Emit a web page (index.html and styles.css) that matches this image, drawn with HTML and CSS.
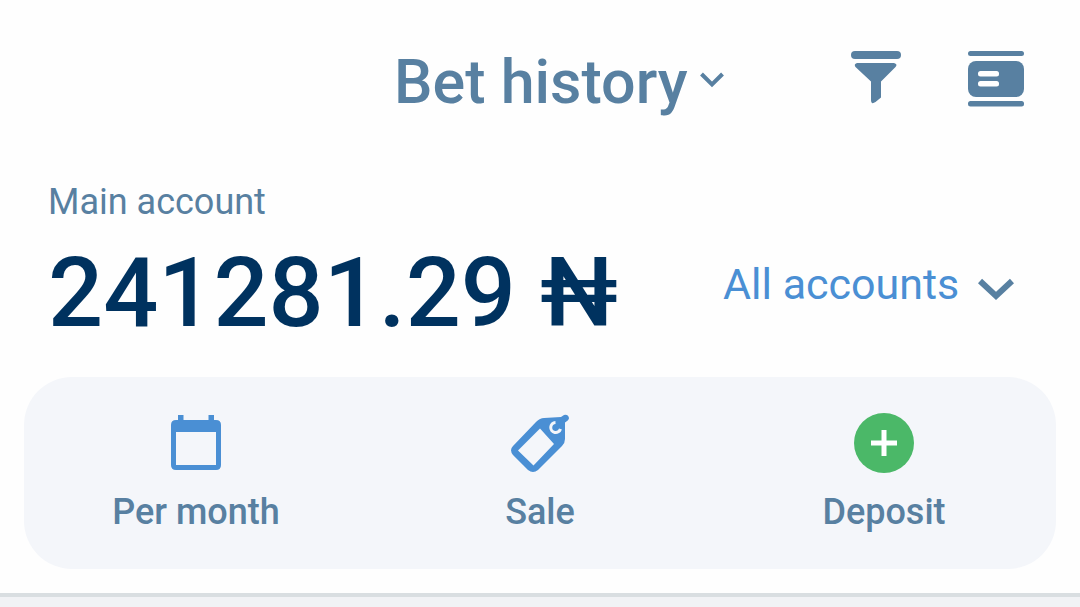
FILE: index.html
```
<!DOCTYPE html>
<html lang="en">
<head>
    <meta charset="UTF-8">
    <meta name="viewport" content="width=device-width, initial-scale=1.0">
    <title>Bet history</title>
    <link rel="stylesheet" href="styles.css">
</head>
<body>

    <main class="account">

        <header class="top_bar">
            <h1 class="page_pick">
                <select class="page_select" aria-label="Page">
                    <option>Bet history</option>
                </select>
                <svg class="page_arrow" viewBox="0 0 24 20" aria-hidden="true">
                    <path d="M1.5 2 L12 12.5 L22.5 2" />
                </svg>
            </h1>
            <div class="tools">
                <button type="button" class="tool" aria-label="Filter">
                    <svg viewBox="0 0 56 64">
                        <rect x="3" y="1" width="50" height="8" rx="4" />
                        <path d="M9 13 H46 Q50 14 47.5 17 L33 31.500 V47.500 L27.500 52 Q23 55 23 50 V31.500 L7.500 17 Q5.500 14 9 13 Z" />
                    </svg>
                </button>
                <button type="button" class="tool" aria-label="Card view">
                    <svg viewBox="0 0 56 64">
                        <rect x="0" y="1" width="56" height="5" rx="2.500" />
                        <rect x="0" y="11" width="56" height="36" rx="8" />
                        <rect x="0" y="51" width="56" height="5.500" rx="2.500" />
                        <rect class="card_line" x="10" y="21" width="21" height="5.500" rx="2.500" />
                        <rect class="card_line" x="10" y="31" width="21" height="5.500" rx="2.500" />
                    </svg>
                </button>
            </div>
        </header>

        <section class="balance">
            <div>
                <p class="balance_name">Main account</p>
                <p class="balance_sum">241281.29 ₦</p>
            </div>
            <div class="account_pick">
                <select class="account_select" aria-label="Account">
                    <option>All accounts</option>
                </select>
                <svg class="account_arrow" viewBox="0 0 36 24" aria-hidden="true">
                    <path d="M2 3 L18 18 L34 3" />
                </svg>
            </div>
        </section>

        <nav class="actions">
            <button type="button" class="action">
                <svg viewBox="0 0 60 60">
                    <path fill-rule="evenodd" d="M12 2 H17.500 V7 H42.500 V2 H48 V7 H50 Q55 7 55 12 V52 Q55 57 50 57 H10 Q5 57 5 52 V12 Q5 7 10 7 H12 Z M10 19 V52 H50 V19 Z" />
                </svg>
                Per month
            </button>
            <button type="button" class="action">
                <svg viewBox="0 0 60 60">
                    <path fill-rule="evenodd" d="M26 9 Q30 5 34 5 L51 4 L54 2 Q58 1 59 5 Q59 7 55 9.500 V26 Q55 30 52 33 L28 57 Q23 61 18 57 L3 42 Q-1 37 3 33 Z M30 15.500 L8 37.500 L23.500 52.500 L44 31 Z" />
                    <path class="tag_hole" d="M45.500 9.500 A5 5 0 1 0 50.500 16" />
                </svg>
                Sale
            </button>
            <button type="button" class="action">
                <svg viewBox="0 0 60 60">
                    <circle class="plus_back" cx="30" cy="30" r="30" />
                    <path class="plus" d="M17 30 H43 M30 17 V43" />
                </svg>
                Deposit
            </button>
        </nav>

    </main>

</body>
</html>
```
FILE: styles.css
```
* {
    padding: 0;
    margin: 0;
    box-sizing: border-box;
    font-family: Roboto, sans-serif;
}
html {
    background: #f1f2f5;
}
button, select {
    appearance: none;
    border: 0;
    background: none;
    cursor: pointer;
}
svg {
    display: block;
    flex: none;
}
.account {
    padding: 46px 24px 24px;
    border-bottom: 4px solid #d9dee1;
    background: #fefefe;
    box-shadow: 0 2px 8px #c8ccd0;
}
.top_bar {
    display: grid;
    grid-template-columns: 1fr auto 1fr;
    align-items: center;
    padding: 0 32px 0 70px;
}
.page_pick {
    grid-column: 2;
    display: flex;
    align-items: center;
    gap: 12px;
}
.page_select {
    font-size: 61px;
    font-weight: 500;
    line-height: 72px;
    color: #5880a1;
}
.page_arrow {
    width: 24px;
    height: 20px;
    fill: none;
    stroke: #5880a1;
    stroke-width: 4;
}
.tools {
    display: flex;
    justify-content: flex-end;
    gap: 64px;
}
.tool svg {
    width: 56px;
    height: 64px;
    fill: #5880a1;
}
.tool .card_line {
    fill: #fefefe;
}
.balance {
    display: flex;
    justify-content: space-between;
    align-items: flex-end;
    padding: 62px 42px 28px 24px;
}
.balance_name {
    margin-bottom: 13px;
    font-size: 36px;
    line-height: 44px;
    color: #5880a1;
}
.balance_sum {
    font-size: 97px;
    font-weight: 500;
    line-height: 112px;
    color: #00325f;
}
.account_pick {
    display: flex;
    align-items: center;
    gap: 18px;
    padding-bottom: 40px;
}
.account_select {
    font-size: 43px;
    line-height: 50px;
    color: #4a8fd4;
}
.account_arrow {
    width: 36px;
    height: 24px;
    margin-top: 12px;
    fill: none;
    stroke: #5880a1;
    stroke-width: 6;
}
.actions {
    display: grid;
    grid-template-columns: repeat(3, 1fr);
    padding: 36px 0 35px;
    border-radius: 48px;
    background: #f4f6fa;
}
.action {
    display: flex;
    flex-direction: column;
    align-items: center;
    gap: 17px;
    font-size: 36px;
    font-weight: 500;
    line-height: 44px;
    color: #5880a1;
}
.action svg {
    width: 60px;
    height: 60px;
    fill: #4a8fd4;
}
.action .tag_hole {
    fill: none;
    stroke: #f4f6fa;
    stroke-width: 3;
}
.action .plus_back {
    fill: #4bb868;
}
.action .plus {
    stroke: #ffffff;
    stroke-width: 5;
}
```
